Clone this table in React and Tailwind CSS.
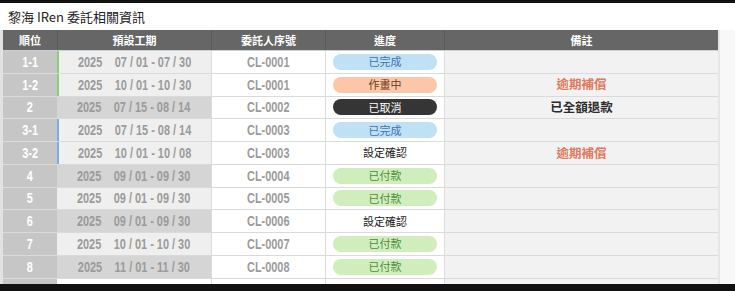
const SANS = "font-['Liberation_Sans',Arial,sans-serif]"
const CJK = "font-['Noto_Sans_CJK_TC','Noto_Sans',sans-serif]"

const rows = [
  { no: '1-1', range: '07 / 01 - 07 / 30', id: 'CL-0001', status: 'done', mark: 'green' },
  { no: '1-2', range: '10 / 01 - 10 / 30', id: 'CL-0001', status: 'wip', note: '逾期補償', noteTone: 'late', mark: 'green' },
  { no: '2', range: '07 / 15 - 08 / 14', id: 'CL-0002', status: 'cancel', note: '已全額退款', noteTone: 'refund', dark: true },
  { no: '3-1', range: '07 / 15 - 08 / 14', id: 'CL-0003', status: 'done', mark: 'blue' },
  { no: '3-2', range: '10 / 01 - 10 / 08', id: 'CL-0003', status: 'confirm', note: '逾期補償', noteTone: 'late', mark: 'blue' },
  { no: '4', range: '09 / 01 - 09 / 30', id: 'CL-0004', status: 'paid', dark: true },
  { no: '5', range: '09 / 01 - 09 / 30', id: 'CL-0005', status: 'paid' },
  { no: '6', range: '09 / 01 - 09 / 30', id: 'CL-0006', status: 'confirm', dark: true },
  { no: '7', range: '10 / 01 - 10 / 30', id: 'CL-0007', status: 'paid' },
  { no: '8', range: '11 / 01 - 11 / 30', id: 'CL-0008', status: 'paid', dark: true },
]

const badges = {
  done: { label: '已完成', cls: 'bg-[#bfe0f5] text-[#3d72b8]' },
  wip: { label: '作畫中', cls: 'bg-[#fcc7a8] text-[#6e3b22]' },
  cancel: { label: '已取消', cls: 'bg-[#353535] text-white' },
  paid: { label: '已付款', cls: 'bg-[#cfeebc] text-[#4d8c3d]' },
  confirm: { label: '設定確認', cls: 'bg-white text-[#222]' },
}

const cols = 'grid grid-cols-[54px_154px_114px_119px_274px]'

// condensed bold digits: no narrow face installed, so squeeze Liberation Sans
function Narrow({ children, className = '' }) {
  return (
    <span className={`inline-flex items-center scale-x-[0.78] font-bold text-[14px] leading-none ${SANS} ${className}`}>
      {children}
    </span>
  )
}

function StatusBadge({ status }) {
  const b = badges[status]
  return (
    <div className={`w-[104px] h-4 rounded-full flex items-center justify-center text-[11px] leading-none ${CJK} ${b.cls}`}>
      {b.label}
    </div>
  )
}

function Row({ row, filler }) {
  const markCls =
    row.mark === 'green' ? 'border-l-2 border-[#8ccf78]' : row.mark === 'blue' ? 'border-l-2 border-[#7aaee0]' : ''
  const periodBg = filler ? 'bg-white' : row.dark ? 'bg-[#d5d5d5]' : 'bg-[#efefef]'
  return (
    <div className={`${cols} h-[22.75px] border-b border-[#dadada]`}>
      <div className="bg-[#c6c6c6] flex items-center justify-center">
        <Narrow className="text-white">{row.no}</Narrow>
      </div>
      <div className={`${periodBg} ${markCls} flex items-center justify-center`}>
        {!filler && (
          <Narrow className="gap-4 text-[#9b9b9b]">
            <span>2025</span>
            <span className="whitespace-pre">{row.range}</span>
          </Narrow>
        )}
      </div>
      <div className="bg-white border-l border-[#dcdcdc] flex items-center justify-center">
        <Narrow className="text-[#9b9b9b]">{row.id}</Narrow>
      </div>
      <div className="bg-white border-l border-[#dcdcdc] flex items-center justify-center">
        {row.status && <StatusBadge status={row.status} />}
      </div>
      <div className={`bg-[#f2f2f2] border-l border-[#dcdcdc] flex items-center justify-center font-bold text-[12.5px] ${CJK} ${row.noteTone === 'late' ? 'text-[#e07a5c]' : 'text-[#2b2b2b]'}`}>
        {row.note}
      </div>
    </div>
  )
}

export default function App() {
  return (
    <div className="w-[735px] h-[291px] bg-[#111] overflow-hidden">
      <div className="mt-[3px] h-[281px] bg-white flex flex-col overflow-hidden">
        <div className={`h-[27px] shrink-0 px-2 flex items-center text-[13px] text-[#222] ${CJK}`}>
          黎海 IRen 委託相關資訊
        </div>
        <div className="flex flex-1 min-h-0">
          <div className="w-[3px] bg-[#e2e2e2]" />
          <div className="w-[715px]">
            <div className={`${cols} h-[21px] bg-[#666] border-b border-[#c9d0da] text-white font-bold text-[11px] ${CJK}`}>
              <div className="flex items-center justify-center">順位</div>
              <div className="flex items-center justify-center border-l border-[#5a5a5a]">預設工期</div>
              <div className="flex items-center justify-center border-l border-[#5a5a5a]">委託人序號</div>
              <div className="flex items-center justify-center border-l border-[#5a5a5a]">進度</div>
              <div className="flex items-center justify-center border-l border-[#5a5a5a]">備註</div>
            </div>
            {rows.map((r) => (
              <Row key={r.no} row={r} />
            ))}
            <Row row={{ no: '' }} filler />
          </div>
          <div className="flex-1 bg-[#f8f8f8] border-l-2 border-[#e6e6e6]" />
        </div>
      </div>
    </div>
  )
}
